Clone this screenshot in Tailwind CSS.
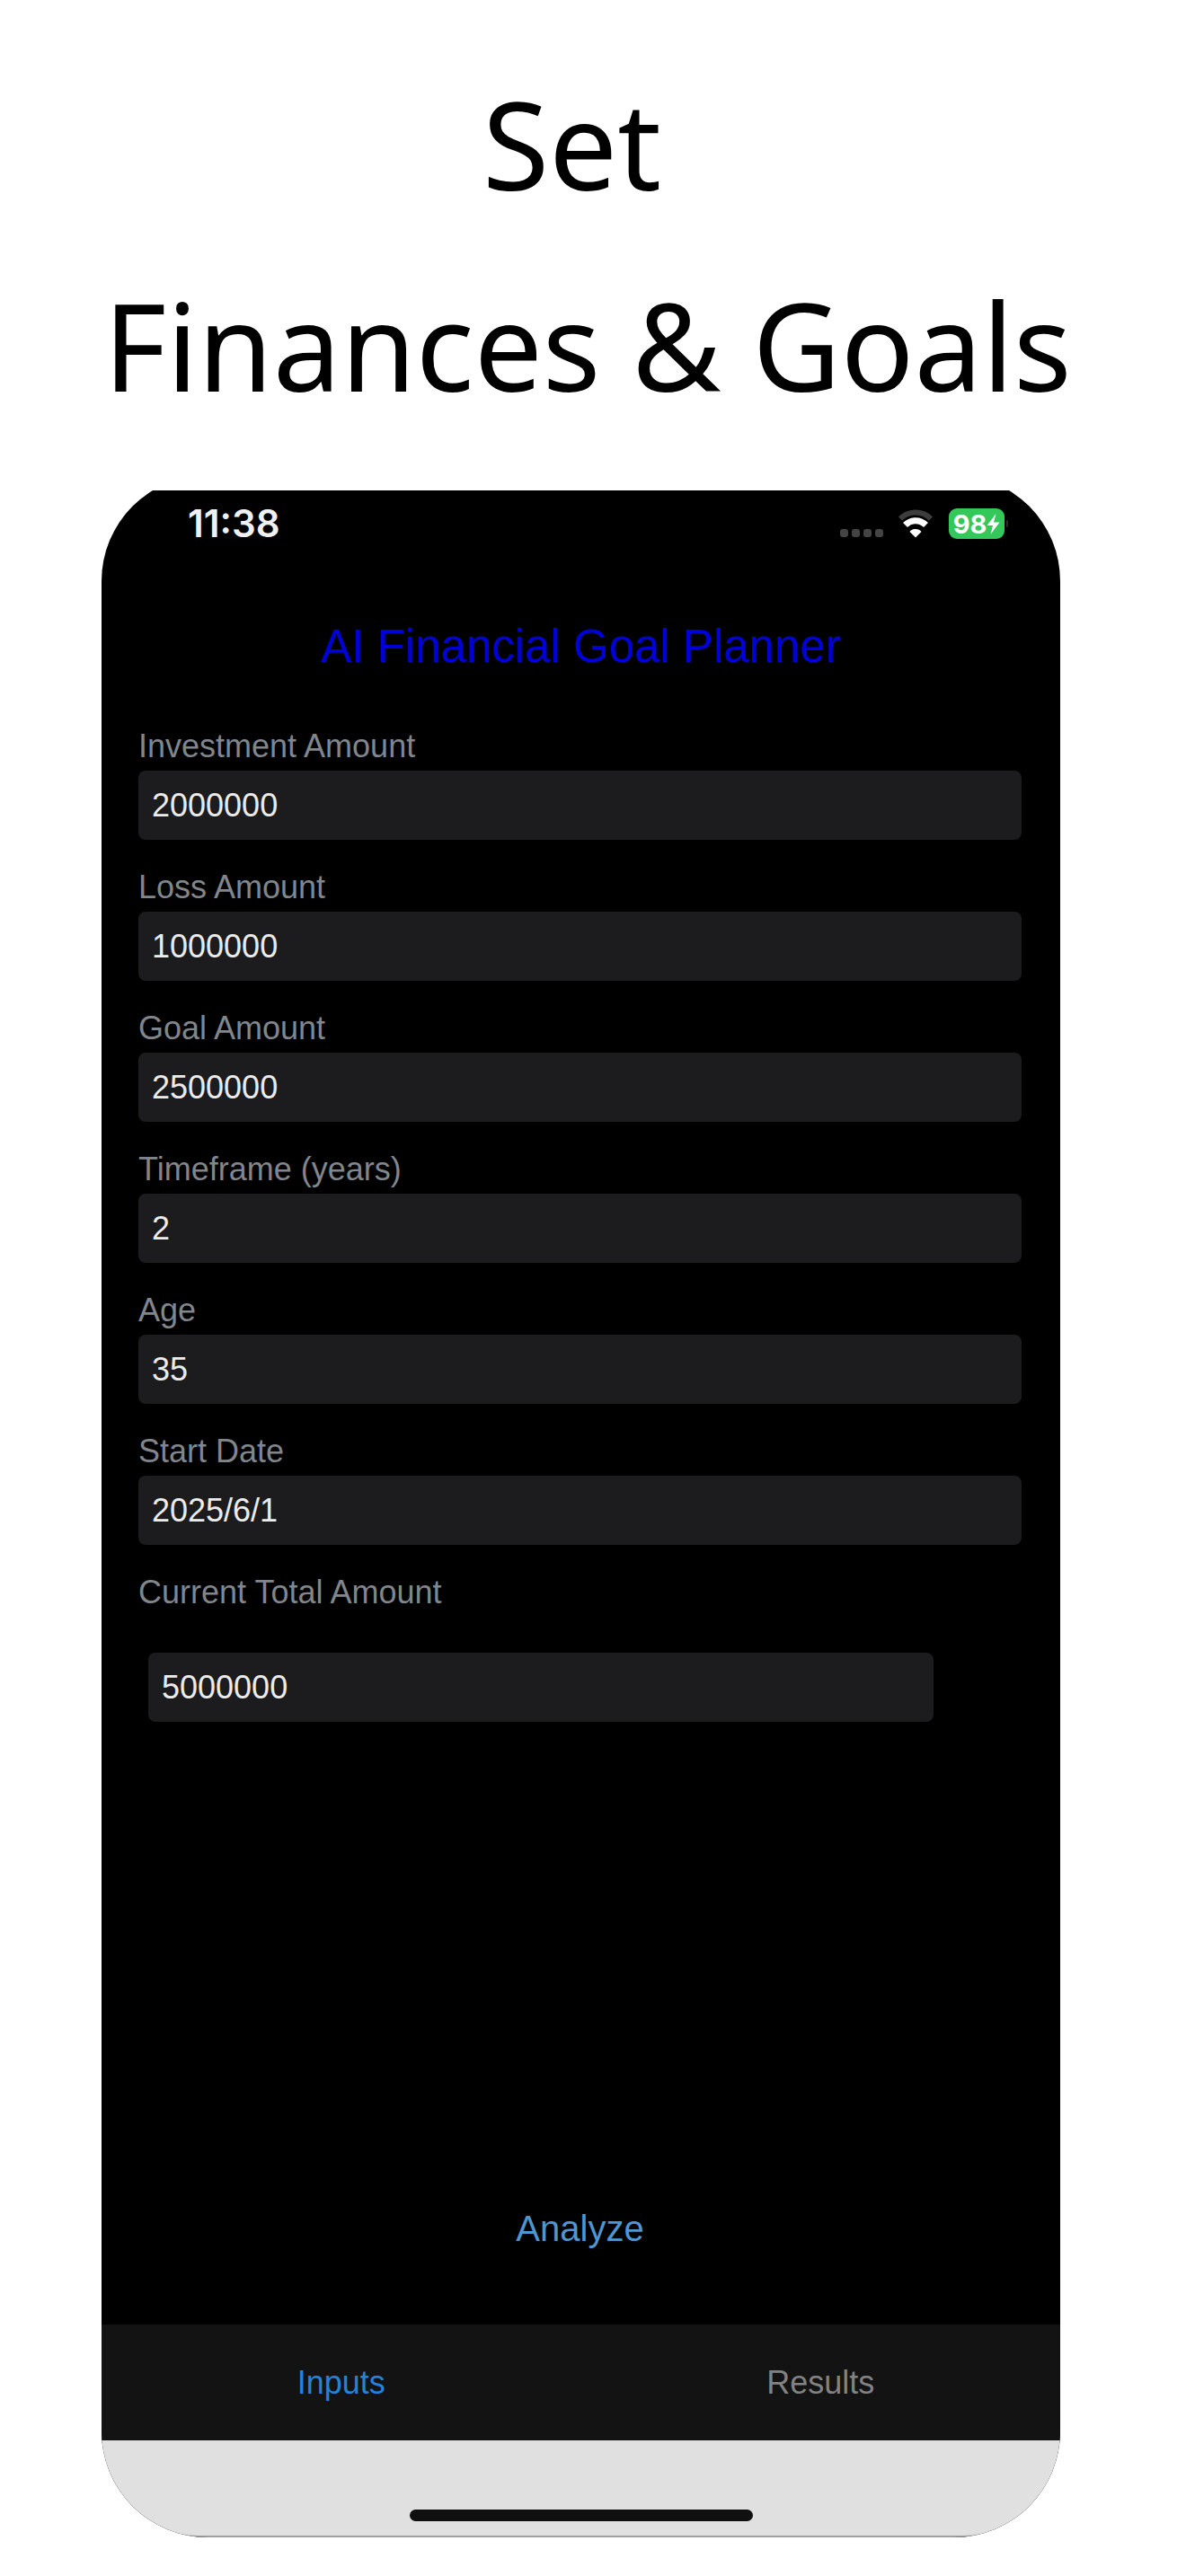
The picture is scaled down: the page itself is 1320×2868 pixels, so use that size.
<!DOCTYPE html>
<html lang="en">
<head>
  <meta charset="UTF-8">
  <meta name="viewport" content="width=device-width, initial-scale=1.0">
  <title>AI Financial Goal Planner</title>
  <script src="https://cdn.jsdelivr.net/npm/@tailwindcss/browser@4"></script>
</head>
<body class="bg-white min-h-screen flex flex-col pb-[43px] font-['Liberation_Sans',Arial,sans-serif]">

  <!-- Headline -->
  <header class="pt-12 pb-[50px] pr-3 text-center text-black font-['Noto_Sans','Open_Sans',sans-serif]">
    <h1 class="text-[135px] leading-[224px] whitespace-nowrap">Set&nbsp;<br>Finances &amp; Goals</h1>
  </header>

  <!-- Phone: the top of the rounded body is cut off flat -->
  <div class="flex-1 flex flex-col ml-[113px] mr-[140px] overflow-hidden">
    <div class="flex-1 flex flex-col -mt-[17px] pt-[17px] rounded-[118px] overflow-hidden bg-black">

      <!-- Status bar -->
      <div class="h-[74px] flex items-center justify-between pl-24 pr-[58px] font-[Inter,sans-serif]">
        <span class="text-[42px] leading-none font-semibold text-[#f0f0f0]">11:38</span>
        <div class="flex items-center">
          <div class="flex gap-1 mt-5 mr-4">
            <span class="size-[9px] rounded-[3px] bg-[#444]"></span>
            <span class="size-[9px] rounded-[3px] bg-[#444]"></span>
            <span class="size-[9px] rounded-[3px] bg-[#444]"></span>
            <span class="size-[9px] rounded-[3px] bg-[#444]"></span>
          </div>
          <svg class="w-10 h-8 mr-[17px]" viewBox="0 0 40 32" fill="none" aria-hidden="true">
            <path d="M3 10.500C12 1 28 1 37 10.500" stroke="#3c3c3c" stroke-width="6"/>
            <path d="M8.500 17.500C15 11 25 11 31.500 17.500" stroke="#fff" stroke-width="7"/>
            <path d="M20 31.500L13.500 25C16 21 24 21 26.500 25Z" fill="#fff"/>
          </svg>
          <div class="w-[62px] h-[34px] rounded-[9px] bg-[#34c759] flex items-center justify-center">
            <span class="text-[29px] leading-none font-bold text-white">98</span>
            <svg class="w-[15px] h-[23px]" viewBox="0 0 15 23" aria-hidden="true">
              <path d="M10.500 0L0.500 13H7L4.500 23L14.500 9.500H8Z" fill="#fff"/>
            </svg>
          </div>
          <span class="w-[2px] h-2 ml-[2px] rounded-r bg-[#2c2c24]"></span>
        </div>
      </div>

      <!-- Inputs screen -->
      <main class="flex-1 flex flex-col">
        <h2 class="mt-[70px] text-center text-[51px] leading-[60px] text-[#0000d8]">AI Financial Goal Planner</h2>

        <form class="flex-1 flex flex-col mt-[61px] pl-[41px] pr-[43px] text-[36px] leading-10">
          <div class="flex flex-col gap-[33px]">
            <div class="flex flex-col gap-[7px]">
              <label for="investment" class="text-[#80868b]">Investment Amount</label>
              <input id="investment" type="text" value="2000000" class="h-[77px] px-[15px] rounded-lg bg-[#1c1c1e] text-[#ebebeb]">
            </div>
            <div class="flex flex-col gap-[7px]">
              <label for="loss" class="text-[#80868b]">Loss Amount</label>
              <input id="loss" type="text" value="1000000" class="h-[77px] px-[15px] rounded-lg bg-[#1c1c1e] text-[#ebebeb]">
            </div>
            <div class="flex flex-col gap-[7px]">
              <label for="goal" class="text-[#80868b]">Goal Amount</label>
              <input id="goal" type="text" value="2500000" class="h-[77px] px-[15px] rounded-lg bg-[#1c1c1e] text-[#ebebeb]">
            </div>
            <div class="flex flex-col gap-[7px]">
              <label for="timeframe" class="text-[#80868b]">Timeframe (years)</label>
              <input id="timeframe" type="text" value="2" class="h-[77px] px-[15px] rounded-lg bg-[#1c1c1e] text-[#ebebeb]">
            </div>
            <div class="flex flex-col gap-[7px]">
              <label for="age" class="text-[#80868b]">Age</label>
              <input id="age" type="text" value="35" class="h-[77px] px-[15px] rounded-lg bg-[#1c1c1e] text-[#ebebeb]">
            </div>
            <div class="flex flex-col gap-[7px]">
              <label for="start-date" class="text-[#80868b]">Start Date</label>
              <input id="start-date" type="text" value="2025/6/1" class="h-[77px] px-[15px] rounded-lg bg-[#1c1c1e] text-[#ebebeb]">
            </div>
            <div class="flex flex-col gap-[47px]">
              <label for="total" class="text-[#80868b]">Current Total Amount</label>
              <input id="total" type="text" value="5000000" class="h-[77px] ml-[11px] mr-[98px] px-[15px] rounded-lg bg-[#1c1c1e] text-[#ebebeb]">
            </div>
          </div>

          <button type="button" class="mt-auto mb-[83px] self-center text-[40px] leading-[48px] text-[#4f96d0]">Analyze</button>
        </form>
      </main>

      <!-- Tabs -->
      <nav class="h-[129px] grid grid-cols-2 bg-[#131313] text-[36px] leading-10">
        <button type="button" class="text-[#2582dc]">Inputs</button>
        <button type="button" class="text-[#828282]">Results</button>
      </nav>

      <!-- Home indicator -->
      <div class="h-[108px] flex items-end justify-center pb-4 bg-[#e0e0e0] border-x border-b-2 border-x-[#c0c0c0] border-b-[#a0a0a0] rounded-b-[118px]">
        <div class="w-[382px] h-[13px] rounded-full bg-[#101010]"></div>
      </div>
    </div>
  </div>

</body>
</html>
